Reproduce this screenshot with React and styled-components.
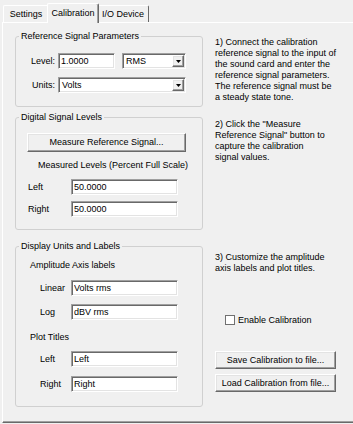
import React from 'react';
import styled, { createGlobalStyle, css } from 'styled-components';

const GlobalStyle = createGlobalStyle`
  * { box-sizing: border-box; }
  html, body { margin: 0; padding: 0; background: #f0f0f0; }
  body {
    font-family: "Liberation Sans", Arial, sans-serif;
    font-size: 9px;
    color: #000;
  }
`;

const Window = styled.div`
  width: 353px;
  height: 424px;
  padding-left: 2px;
  background: #f0f0f0;
  overflow: hidden;
  display: flex;
  flex-direction: column;
`;

const TabStrip = styled.div`
  display: flex;
  align-items: flex-end;
  height: 22px;
  padding-left: 1px;
  position: relative;
  z-index: 1;
`;

const Tab = styled.div`
  position: relative;
  width: ${(p) => p.$w}px;
  height: ${(p) => (p.$active ? 20 : 17)}px;
  margin: 0 ${(p) => (p.$active ? -2 : 0)}px ${(p) => (p.$active ? -1 : 0)}px
    ${(p) => (p.$active ? -2 : 0)}px;
  padding-top: ${(p) => (p.$active ? 0 : 1)}px;
  z-index: ${(p) => (p.$active ? 2 : 1)};
  display: flex;
  align-items: center;
  justify-content: center;
  line-height: 11px;
  white-space: nowrap;
  background: #f0f0f0;
  border-top: 1px solid #fff;
  border-left: 1px solid #fff;
  border-right: 1px solid #696969;
  border-radius: 2px 2px 0 0;
  ${(p) =>
    p.$active &&
    css`
      box-shadow: inset -1px 0 0 #a0a0a0;
    `}
`;

const TabPage = styled.div`
  width: 352px;
  height: 401px;
  border-top: 1px solid #fff;
  border-left: 1px solid #fff;
  border-bottom: 1px solid #696969;
  box-shadow: inset 0 -1px 0 #a0a0a0;
  padding: 7px 0 0 12px;
`;

const Layout = styled.div`
  display: grid;
  grid-template-columns: 188px 138px;
  column-gap: 12px;
  align-items: start;
`;

const Group = styled.fieldset`
  margin: ${(p) => p.$mt || 0}px 0 0 0;
  padding: ${(p) => p.$pt}px 0 ${(p) => p.$pb}px 0;
  border: 1px solid #d0d0d0;
  border-radius: 3px;
  min-width: 0;
`;

const Legend = styled.legend`
  margin-left: 3px;
  padding: 0 2px;
  line-height: 12px;
  white-space: nowrap;
`;

const Stack = styled.div`
  display: flex;
  flex-direction: column;
  padding-left: ${(p) => p.$pl || 0}px;
  gap: ${(p) => p.$gap || 0}px;
`;

const Row = styled.div`
  display: flex;
  align-items: center;
  height: 16px;
  margin-top: ${(p) => p.$mt || 0}px;
`;

const FieldLabel = styled.span`
  width: ${(p) => p.$w}px;
  text-align: ${(p) => (p.$right ? 'right' : 'left')};
  margin-right: ${(p) => (p.$right ? 3 : 0)}px;
  line-height: 11px;
  white-space: nowrap;
`;

const Caption = styled.div`
  line-height: 11px;
  white-space: nowrap;
  margin-top: ${(p) => p.$mt || 0}px;
  padding-left: ${(p) => p.$pl || 0}px;
`;

const sunken = css`
  background: #fff;
  border: 1px solid;
  border-color: #a0a0a0 #fff #fff #a0a0a0;
  box-shadow: inset 1px 1px 0 #696969, inset -1px -1px 0 #e3e3e3;
`;

const raised = css`
  background: #f0f0f0;
  border: 1px solid;
  border-color: #fff #696969 #696969 #fff;
  box-shadow: inset -1px -1px 0 #a0a0a0, inset 1px 1px 0 #e3e3e3;
`;

const TextBox = styled.input`
  ${sunken};
  width: ${(p) => p.$w}px;
  height: 16px;
  margin-left: ${(p) => p.$ml || 0}px;
  padding: 0 0 1px 2px;
  font: inherit;
  color: #000;
  outline: none;
`;

const Combo = styled.div`
  ${sunken};
  width: ${(p) => p.$w}px;
  height: 16px;
  margin-left: ${(p) => p.$ml || 0}px;
  padding: 1px;
  display: flex;
  align-items: center;
`;

const ComboText = styled.span`
  flex: 1;
  padding-left: 2px;
  line-height: 11px;
`;

const DropButton = styled.span`
  ${raised};
  width: 12px;
  height: 12px;
  display: flex;
  align-items: center;
  justify-content: center;
`;

const PushButton = styled.button`
  ${raised};
  display: block;
  width: ${(p) => p.$w}px;
  height: ${(p) => p.$h}px;
  margin: ${(p) => p.$mt || 0}px 0 0 ${(p) => p.$ml || 0}px;
  padding: 0;
  font: inherit;
  color: #000;
  line-height: 11px;
  white-space: nowrap;
`;

const Note = styled.p`
  margin: 0;
  padding-top: ${(p) => p.$pt}px;
  line-height: 11px;
  white-space: nowrap;
`;

const SideColumn = styled.div`
  display: flex;
  flex-direction: column;
`;

const CheckRow = styled.label`
  display: flex;
  align-items: center;
  height: 12px;
  margin: 40px 0 0 10px;
  line-height: 11px;
`;

const CheckBox = styled.span`
  width: 10px;
  height: 10px;
  background: #fff;
  border: 1px solid #707070;
  margin-right: 3px;
`;

const Arrow = () => (
  <svg width="5" height="3" viewBox="0 0 5 3">
    <polygon points="0,0 5,0 2.5,3" fill="#000" />
  </svg>
);

export default function App() {
  return (
    <>
      <GlobalStyle />
      <Window>
        <TabStrip>
          <Tab $w={46}>Settings</Tab>
          <Tab $w={52} $active>
            Calibration
          </Tab>
          <Tab $w={52}>I/O Device</Tab>
        </TabStrip>
        <TabPage>
          <Layout>
            <Group $pt={11} $pb={13}>
              <Legend>Reference Signal Parameters</Legend>
              <Stack $gap={8}>
                <Row>
                  <FieldLabel $w={39} $right>
                    Level:
                  </FieldLabel>
                  <TextBox $w={57} value="1.0000" readOnly />
                  <Combo $w={64} $ml={7}>
                    <ComboText>RMS</ComboText>
                    <DropButton>
                      <Arrow />
                    </DropButton>
                  </Combo>
                </Row>
                <Row>
                  <FieldLabel $w={39} $right>
                    Units:
                  </FieldLabel>
                  <Combo $w={128}>
                    <ComboText>Volts</ComboText>
                    <DropButton>
                      <Arrow />
                    </DropButton>
                  </Combo>
                </Row>
              </Stack>
            </Group>
            <Note $pt={7}>
              1) Connect the calibration
              <br />
              reference signal to the input of
              <br />
              the sound card and enter the
              <br />
              reference signal parameters.
              <br />
              The reference signal must be
              <br />a steady state tone.
            </Note>

            <Group $mt={4} $pt={10} $pb={12}>
              <Legend>Digital Signal Levels</Legend>
              <PushButton $w={159} $h={19} $ml={11}>
                Measure Reference Signal...
              </PushButton>
              <Caption $mt={8} $pl={22}>
                Measured Levels (Percent Full Scale)
              </Caption>
              <Stack $pl={12} $gap={6}>
                <Row $mt={8}>
                  <FieldLabel $w={43}>Left</FieldLabel>
                  <TextBox $w={107} value="50.0000" readOnly />
                </Row>
                <Row>
                  <FieldLabel $w={43}>Right</FieldLabel>
                  <TextBox $w={107} value="50.0000" readOnly />
                </Row>
              </Stack>
            </Group>
            <Note $pt={12}>
              2) Click the "Measure
              <br />
              Reference Signal" button to
              <br />
              capture the calibration
              <br />
              signal values.
            </Note>

            <Group $mt={10} $pt={8} $pb={14}>
              <Legend>Display Units and Labels</Legend>
              <Caption $pl={14}>Amplitude Axis labels</Caption>
              <Stack $pl={24} $gap={8}>
                <Row $mt={9}>
                  <FieldLabel $w={31}>Linear</FieldLabel>
                  <TextBox $w={107} value="Volts rms" readOnly />
                </Row>
                <Row>
                  <FieldLabel $w={31}>Log</FieldLabel>
                  <TextBox $w={107} value="dBV rms" readOnly />
                </Row>
              </Stack>
              <Caption $mt={12} $pl={14}>
                Plot Titles
              </Caption>
              <Stack $pl={24} $gap={9}>
                <Row $mt={8}>
                  <FieldLabel $w={31}>Left</FieldLabel>
                  <TextBox $w={107} value="Left" readOnly />
                </Row>
                <Row>
                  <FieldLabel $w={31}>Right</FieldLabel>
                  <TextBox $w={107} value="Right" readOnly />
                </Row>
              </Stack>
            </Group>
            <SideColumn>
              <Note $pt={22}>
                3) Customize the amplitude
                <br />
                axis labels and plot titles.
              </Note>
              <CheckRow>
                <CheckBox />
                Enable Calibration
              </CheckRow>
              <PushButton $w={121} $h={18} $mt={25}>
                Save Calibration to file...
              </PushButton>
              <PushButton $w={121} $h={18} $mt={5}>
                Load Calibration from file...
              </PushButton>
            </SideColumn>
          </Layout>
        </TabPage>
      </Window>
    </>
  );
}
